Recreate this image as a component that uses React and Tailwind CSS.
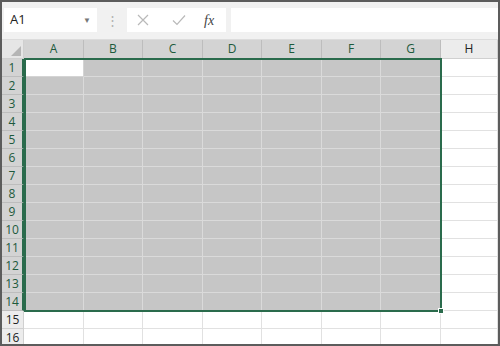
import React from 'react';

const cols = ['A', 'B', 'C', 'D', 'E', 'F', 'G', 'H'];
const rows = Array.from({ length: 16 }, (_, i) => i + 1);

const font = { fontFamily: '"Open Sans", "Noto Sans", "Liberation Sans", sans-serif' };

const Cell = ({ r, c }) => {
    const selected = r <= 14 && c !== 'H';
    const active = r === 1 && c === 'A';
    let cls = 'border-r border-b ';
    if (active) cls += 'bg-white border-[#d4d4d4]';
    else if (selected) cls += 'bg-[#c6c6c6] border-[#dadada]';
    else cls += 'bg-white border-[#e1e1e1]';
    return <div className={cls} />;
};

const App = () => {
    return (
        <div className="w-[500px] h-[346px] overflow-hidden border-2 border-[#5c5c5c] bg-[#f1f1f1] flex flex-col" style={font}>
            {/* formula bar */}
            <div className="h-[38px] flex items-start pt-[6px] pl-[2px] pr-0 border-b border-[#dcdcdc] shrink-0">
                <div className="w-[93px] h-[24px] bg-white flex items-center justify-between pl-[6px] pr-[6px]">
                    <span className="text-[13px] text-[#222]">A1</span>
                    <span className="text-[8px] text-[#777]">▼</span>
                </div>
                <div className="w-[30px] h-[24px] flex items-center justify-center">
                    <span className="text-[#b0b0b0] text-[13px] leading-none">⋮</span>
                </div>
                <div className="w-[99px] h-[24px] bg-white flex items-center">
                    <svg width="14" height="14" viewBox="0 0 14 14" className="ml-[9px]">
                        <path d="M2 2 L12 12 M12 2 L2 12" stroke="#b9b9b9" strokeWidth="1.2" fill="none" />
                    </svg>
                    <svg width="16" height="14" viewBox="0 0 16 14" className="ml-[21px]">
                        <path d="M2 7.5 L6 11.5 L14 2.5" stroke="#b9b9b9" strokeWidth="1.2" fill="none" />
                    </svg>
                    <span className="ml-[17px] text-[14px] italic text-[#444]" style={{ fontFamily: '"Liberation Serif", serif' }}>fx</span>
                </div>
                <div className="w-[5px]" />
                <div className="flex-1 h-[24px] bg-white" />
            </div>

            {/* sheet */}
            <div className="relative flex-1">
                <div className="grid grid-cols-[22px_60px_59px_60px_59px_60px_59px_60px_1fr] grid-rows-[19px] auto-rows-[18px]">
                    <div className="bg-[#e6e6e6] border-r border-b border-[#cfcfcf] relative">
                        <div className="absolute right-[2px] bottom-[2px] w-0 h-0 border-l-[10px] border-l-transparent border-b-[10px] border-b-[#b5b5b5]" />
                    </div>
                    {cols.map(c => (
                        <div
                            key={c}
                            className={c === 'H'
                                ? 'bg-[#ececec] border-r border-b border-[#d0d0d0] flex items-center justify-center text-[12px] text-[#222]'
                                : 'bg-[#d3d3d3] border-r border-b border-[#bdbdbd] flex items-center justify-center text-[12px] text-[#1d5a3c]'}
                        >
                            {c}
                        </div>
                    ))}
                    {rows.map(r => (
                        <React.Fragment key={r}>
                            <div
                                className={r <= 14
                                    ? 'bg-[#d3d3d3] border-r-2 border-r-[#2a6b4c] border-b border-b-[#bdbdbd] flex items-center justify-center text-[12px] text-[#1d5a3c]'
                                    : 'bg-[#ececec] border-r border-b border-[#d0d0d0] flex items-center justify-center text-[12px] text-[#222]'}
                            >
                                {r}
                            </div>
                            {cols.map(c => <Cell key={c} r={r} c={c} />)}
                        </React.Fragment>
                    ))}
                </div>
                {/* selection outline */}
                <div className="absolute left-[22px] top-[18px] w-[418px] h-[254px] border-2 border-[#2a6b4c] pointer-events-none" />
                <div className="absolute left-[436px] top-[268px] w-[6px] h-[6px] bg-[#2a6b4c] border border-white pointer-events-none" />
            </div>
        </div>
    );
};

export default App;
